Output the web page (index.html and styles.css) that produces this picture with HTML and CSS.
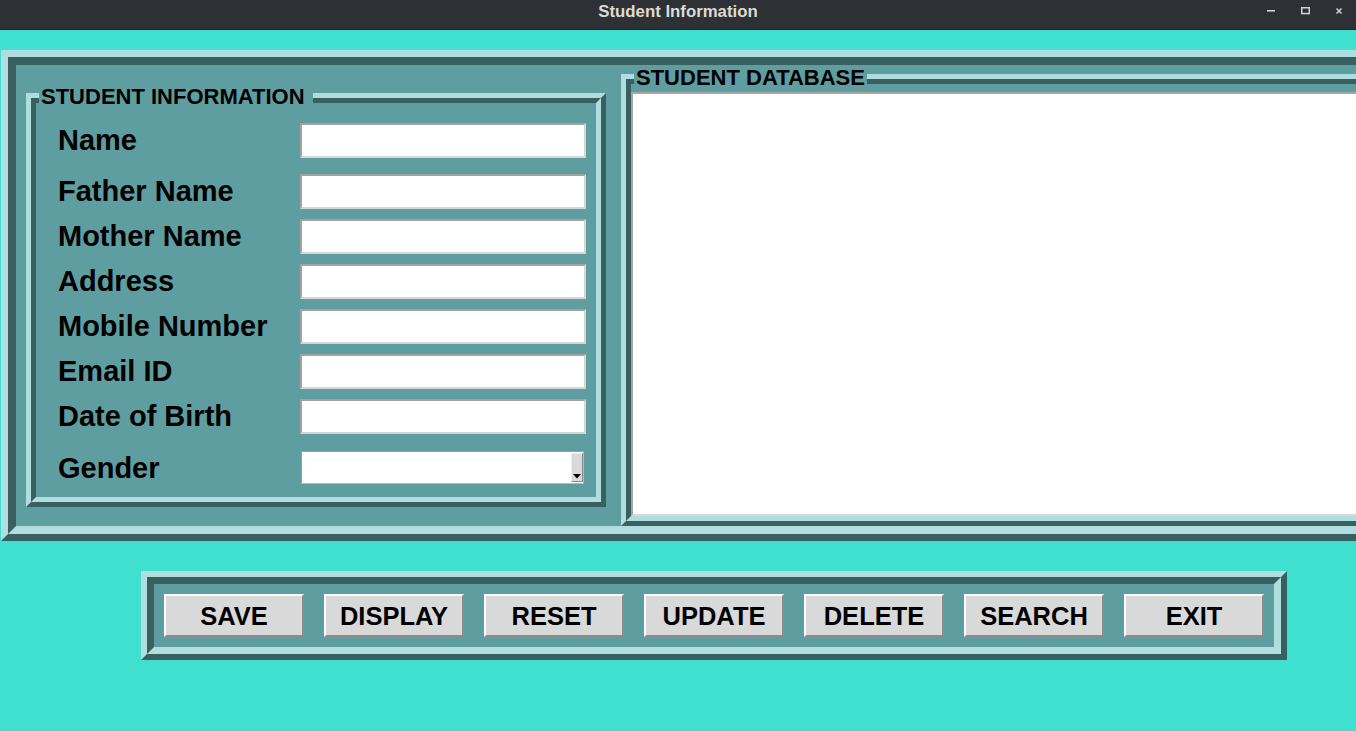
FILE: index.html
```html
<!DOCTYPE html>
<html lang="en">
<head>
<meta charset="utf-8">
<title>Student Information</title>
<link rel="stylesheet" href="styles.css">
</head>
<body>
<header class="titlebar">
  <span class="title">Student Information</span>
  <svg class="controls" width="100" height="29" viewBox="0 0 100 29" aria-hidden="true">
    <rect x="11" y="10" width="8" height="1.6" fill="#d2d2d2"/>
    <rect x="45.75" y="7.75" width="7.5" height="5.8" fill="none" stroke="#d2d2d2" stroke-width="1.5"/>
    <path d="M80.5 8.5 L85.5 13.5 M85.5 8.5 L80.5 13.5" stroke="#d2d2d2" stroke-width="1.5" fill="none"/>
  </svg>
</header>

<main class="app">
  <div class="ridge-out main-frame">
    <div class="ridge-in main-inner">

      <section class="labelframe lf-info">
        <span class="legend legend-wide">STUDENT INFORMATION</span>
        <div class="ridge-out lf-border">
          <div class="ridge-in lf-content form">
            <label class="lbl">Name</label>
            <input class="entry" type="text">
            <label class="lbl">Father Name</label>
            <input class="entry" type="text">
            <label class="lbl">Mother Name</label>
            <input class="entry" type="text">
            <label class="lbl">Address</label>
            <input class="entry" type="text">
            <label class="lbl">Mobile Number</label>
            <input class="entry" type="text">
            <label class="lbl">Email ID</label>
            <input class="entry" type="text">
            <label class="lbl">Date of Birth</label>
            <input class="entry" type="text">
            <label class="lbl lbl-gender">Gender</label>
            <div class="combo">
              <div class="combo-arrow">
                <svg width="8" height="5" viewBox="0 0 8 5" aria-hidden="true"><polygon points="0,0 8,0 4,4.5" fill="#000"/></svg>
              </div>
            </div>
          </div>
        </div>
      </section>

      <section class="labelframe lf-db">
        <span class="legend">STUDENT DATABASE</span>
        <div class="ridge-out lf-border">
          <div class="ridge-in lf-content db-content">
            <div class="listbox"></div>
          </div>
        </div>
      </section>

    </div>
  </div>

  <div class="ridge-out btn-frame">
    <div class="ridge-in btn-inner">
      <button class="btn">SAVE</button>
      <button class="btn">DISPLAY</button>
      <button class="btn">RESET</button>
      <button class="btn">UPDATE</button>
      <button class="btn">DELETE</button>
      <button class="btn">SEARCH</button>
      <button class="btn">EXIT</button>
    </div>
  </div>
</main>
</body>
</html>
```

FILE: styles.css
```css
* { box-sizing: border-box; }

html, body {
  margin: 0;
  padding: 0;
}

body {
  width: 1356px;
  height: 731px;
  overflow: hidden;
  background: #40e0d0;
  font-family: "Liberation Sans", Arial, sans-serif;
}

/* ---------- window title bar ---------- */
.titlebar {
  position: relative;
  height: 30px;
  background: #2d3136;
  border-bottom: 1px solid #1c1e21;
  display: flex;
  justify-content: center;
  align-items: flex-start;
  padding-top: 4px;
}

.title {
  color: #dfdbd2;
  font-weight: bold;
  font-size: 16.8px;
  line-height: 16px;
}

.controls {
  position: absolute;
  right: 0;
  top: 0;
}

/* ---------- tk ridge borders ---------- */
.ridge-out {
  border-style: solid;
  border-color: #afdde0 #395f60 #395f60 #afdde0;
}

.ridge-in {
  border-style: solid;
  border-color: #395f60 #afdde0 #afdde0 #395f60;
  background: #5f9ea0;
}

/* ---------- main frame ---------- */
.app {
  padding-top: 20px;
}

.main-frame {
  margin-left: 1px;
  width: 1420px;
  height: 491px;
  border-width: 7px;
}

.main-inner {
  height: 100%;
  border-width: 8px;
  display: flex;
  align-items: flex-start;
  padding-left: 10px;
}

/* ---------- label frames ---------- */
.labelframe {
  position: relative;
}

.lf-border {
  height: 100%;
  border-width: 5px;
}

.lf-content {
  height: 100%;
  border-width: 5px;
}

.legend {
  position: absolute;
  top: -8px;
  left: 13px;
  z-index: 1;
  padding: 0 2px;
  background: #5f9ea0;
  color: #000;
  font-weight: bold;
  font-size: 22px;
  line-height: 24px;
}

.legend-wide {
  padding-right: 8px;
}

.lf-info {
  margin-top: 28px;
  width: 580px;
  height: 414px;
}

.lf-db {
  margin-top: 9px;
  margin-left: 15px;
  height: 452px;
  flex: 1;
}

/* ---------- form ---------- */
.form {
  display: grid;
  grid-template-columns: 264px 286px;
  grid-template-rows: 56px 46px 45px 45px 45px 45px 45px 57px;
  align-items: center;
  padding-top: 9px;
}

.lbl {
  padding-left: 22px;
  font-weight: bold;
  font-size: 29px;
  color: #000;
  white-space: nowrap;
}

.lbl-gender {
  padding-top: 2px;
}

.entry {
  -webkit-appearance: none;
  appearance: none;
  display: block;
  width: 286px;
  height: 35px;
  margin: 0;
  padding: 0 3px;
  background: #fff;
  border: 2px solid;
  border-color: #a2a2a2 #d6d6d6 #d6d6d6 #a2a2a2;
  border-radius: 0;
  outline: none;
  font-family: "Liberation Sans", Arial, sans-serif;
  font-size: 16px;
}

.combo {
  width: 283px;
  height: 33px;
  margin-left: 1px;
  background: #fff;
  border: 1px solid;
  border-color: #9c9c9c #b8b8b8 #b8b8b8 #9c9c9c;
  display: flex;
  justify-content: flex-end;
  align-items: center;
}

.combo-arrow {
  width: 12px;
  height: 29px;
  background: #d9d9d9;
  border-right: 1px solid #8a8a8a;
  border-bottom: 1px solid #8a8a8a;
  border-top: 1px solid #ececec;
  border-left: 1px solid #ececec;
  display: flex;
  flex-direction: column;
  justify-content: flex-end;
  align-items: center;
  padding-bottom: 2px;
}

.combo-arrow svg {
  display: block;
}

/* ---------- database listbox ---------- */
.db-content {
  padding-top: 8px;
}

.listbox {
  height: 100%;
  background: #fff;
  border: 2px solid;
  border-color: #a6a6a6 #d9d9d9 #d9d9d9 #a6a6a6;
}

/* ---------- buttons ---------- */
.btn-frame {
  margin-top: 30px;
  margin-left: 141px;
  width: 1146px;
  height: 89px;
  border-width: 6px;
}

.btn-inner {
  height: 100%;
  border-width: 7px;
  display: flex;
  gap: 20px;
  padding: 10px;
}

.btn {
  width: 140px;
  height: 43px;
  margin: 0;
  padding: 2px 0 0;
  background: #d9d9d9;
  border: 2px solid;
  border-color: #ffffff #8c8c8c #8c8c8c #ffffff;
  border-radius: 0;
  font-family: "Liberation Sans", Arial, sans-serif;
  font-weight: bold;
  font-size: 25.5px;
  color: #000;
  line-height: 1;
  cursor: pointer;
}
```
